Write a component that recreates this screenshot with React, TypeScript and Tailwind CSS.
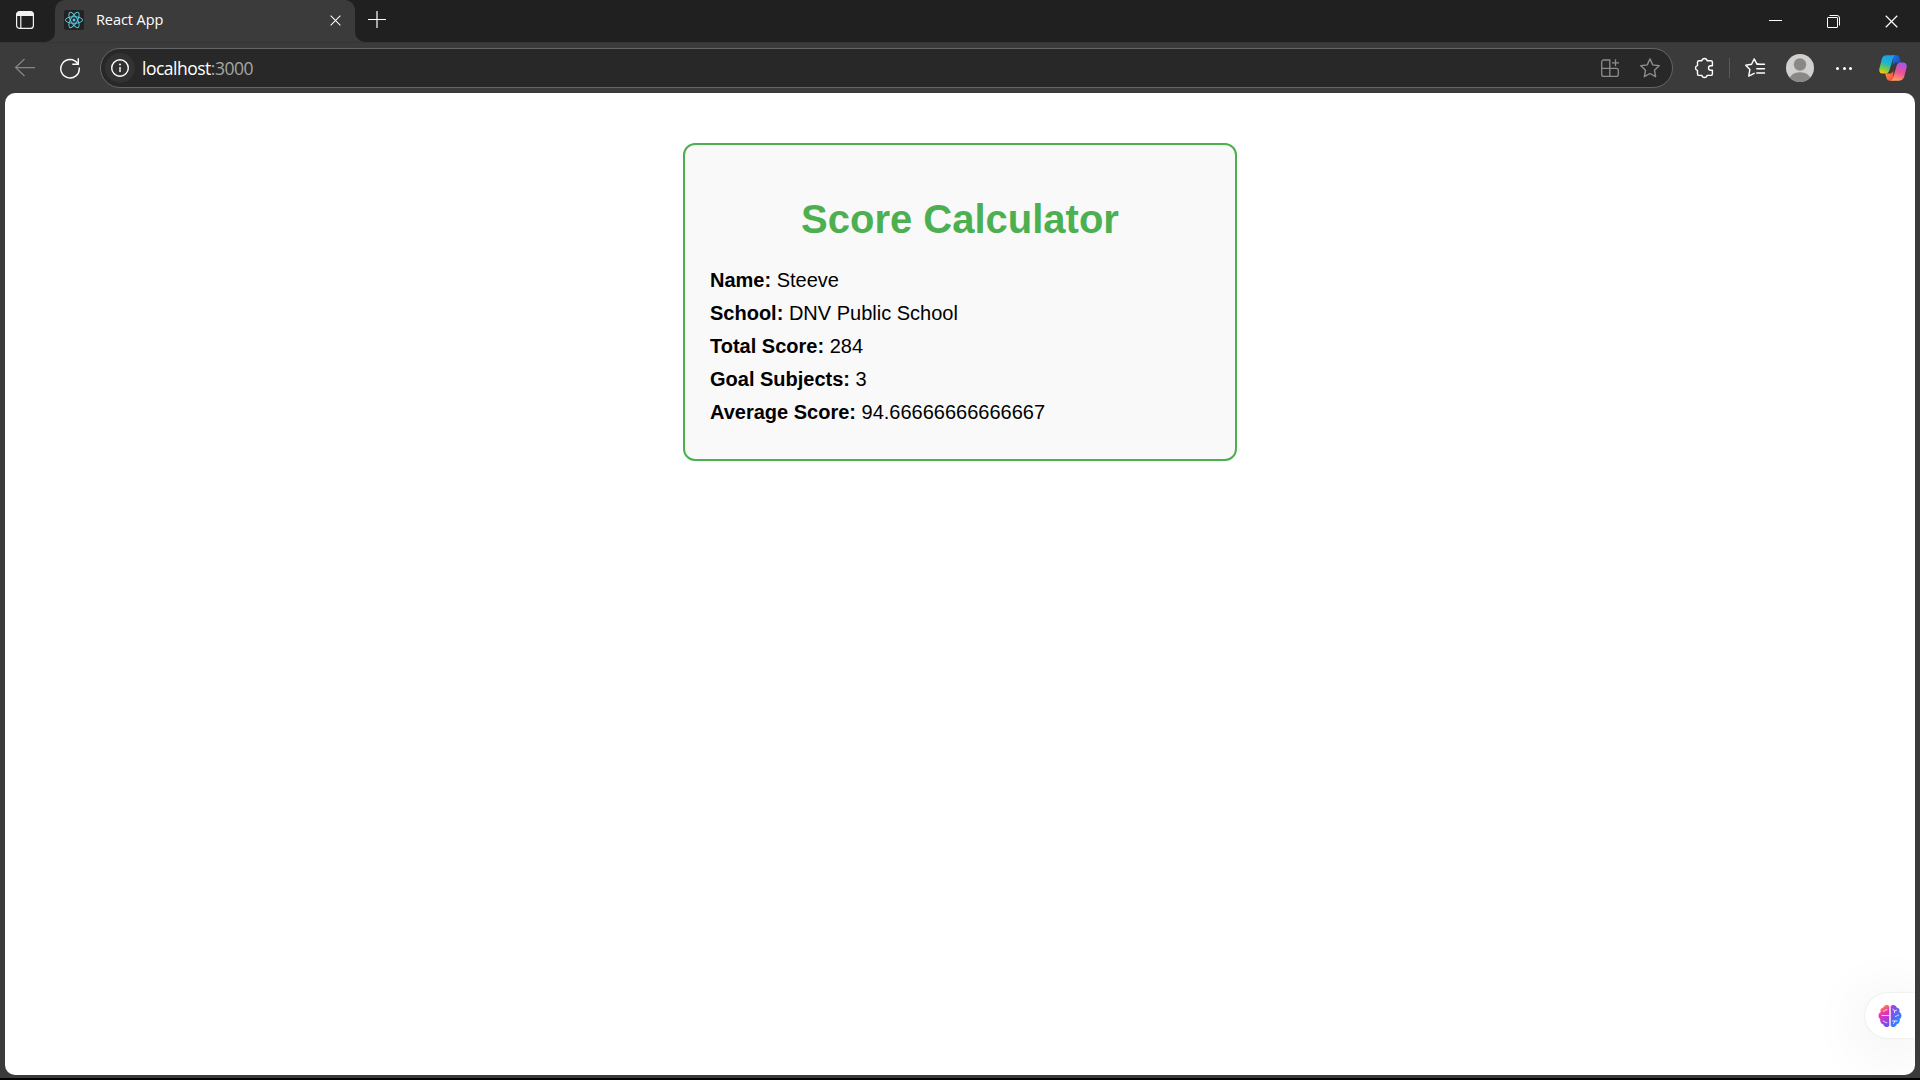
import React from "react";

type IconProps = { className?: string };

const TabActionsIcon = () => (
  <svg className="size-5 text-[#f2f2f2]" viewBox="0 0 20 20" fill="none" stroke="currentColor" strokeWidth="1.2">
    <rect x="1.600" y="1.600" width="16.800" height="16.800" rx="3" />
    <path d="M2 4.500C2 3 3 2 4.500 2h11C17 2 18 3 18 4.500V5.500H2z" fill="currentColor" />
    <path d="M5.800 6v12" />
  </svg>
);

const ReactIcon = () => (
  <svg className="size-5 shrink-0 rounded-[2px] bg-[#222]" viewBox="0 0 20 20" fill="none" stroke="#58c4dc" strokeWidth="1">
    <circle cx="10" cy="10" r="1.5" fill="#58c4dc" stroke="none" />
    <ellipse cx="10" cy="10" rx="8.600" ry="3.300" />
    <ellipse cx="10" cy="10" rx="8.600" ry="3.300" transform="rotate(60 10 10)" />
    <ellipse cx="10" cy="10" rx="8.600" ry="3.300" transform="rotate(120 10 10)" />
  </svg>
);

const BackIcon = () => (
  <svg className="size-[22px] text-[#858585]" viewBox="0 0 22 22" fill="none" stroke="currentColor" strokeWidth="1.25">
    <path d="M21 10.500H1.500M10.500 2 1.600 10.500l8.900 8.500" />
  </svg>
);

const ReloadIcon = () => (
  <svg className="size-[22px] text-white" viewBox="0 0 22 22" fill="none" stroke="currentColor" strokeWidth="1.4">
    <path d="M18.700 6.600A9.250 9.250 0 1 0 20.250 11" strokeLinecap="round" />
    <path d="M19.300 1.300v5.900h-6" />
  </svg>
);

const InfoIcon = () => (
  <svg className="size-5 text-white" viewBox="0 0 20 20" fill="none" stroke="currentColor" strokeWidth="1.4">
    <circle cx="10" cy="10" r="8.300" />
    <path d="M10 9v5" />
    <circle cx="10" cy="6.500" r="0.950" fill="currentColor" stroke="none" />
  </svg>
);

const AppsIcon = () => (
  <svg className="size-5 text-[#8c8c8c]" viewBox="0 0 20 20" fill="none" stroke="currentColor" strokeWidth="1.3">
    <path d="M9.800 10.300H1.700V4a2 2 0 0 1 2-2h6.100zM1.700 10.300h8.100v8.100H3.700a2 2 0 0 1-2-2zM9.800 10.300h6.500a2 2 0 0 1 2 2v4.100a2 2 0 0 1-2 2H9.800zM15.500 1.300v7M12 4.800h7" />
  </svg>
);

const StarIcon = () => (
  <svg className="size-[22px] text-[#8c8c8c]" viewBox="0 0 22 22" fill="none" stroke="currentColor" strokeWidth="1.4" strokeLinejoin="round">
    <path d="m11 1.900 2.750 6 6.500.800-4.800 4.500 1.200 6.500L11 16.500l-5.650 3.200 1.200-6.500-4.800-4.500 6.500-.800z" />
  </svg>
);

const PuzzleIcon = () => (
  <svg className="size-[22px] text-white" viewBox="0 0 22 22" fill="none" stroke="currentColor" strokeWidth="1.4" strokeLinejoin="round">
    <path d="M8.900 3.700a2.650 2.650 0 0 1 5.200 0h3.800a1.500 1.500 0 0 1 1.500 1.500v3.500h-1.600a2.300 2.300 0 0 0 0 4.600h1.600v3.600a1.500 1.500 0 0 1-1.500 1.500h-3.800a2.650 2.650 0 0 1-5.200 0H6a1.500 1.500 0 0 1-1.500-1.500v-3.400a2.500 2.500 0 0 1 0-4.900V5.200A1.500 1.500 0 0 1 6 3.700z" />
  </svg>
);

const FavoritesIcon = () => (
  <svg className="size-[22px] text-white" viewBox="0 0 22 22" fill="none" stroke="currentColor" strokeWidth="1.4" strokeLinejoin="round" strokeLinecap="round">
    <path d="M14.800 7.200 12.800 6.900 10.200 1.900 7.600 7.200 1.700 8.200l4.200 4.300-1.200 6.600 5.500-2.800" />
    <path d="M13.200 7.300H20.500M12.800 11.700h7.700M12.800 16h7.700" />
  </svg>
);

const Avatar = () => (
  <svg className="size-7" viewBox="0 0 28 28">
    <defs>
      <clipPath id="avatar"><circle cx="14" cy="14" r="14" /></clipPath>
    </defs>
    <g clipPath="url(#avatar)">
      <rect width="28" height="28" fill="#d2d0ce" />
      <circle cx="14" cy="10.500" r="6.200" fill="#8a8886" />
      <path d="M3 28c0-6 4-9.800 11-9.800S25 22 25 28z" fill="#8a8886" />
    </g>
  </svg>
);

const CopilotIcon = () => (
  <svg className="h-[26px] w-7" viewBox="0 0 28 26">
    <defs>
      <linearGradient id="cpA" x1="0.600" y1="0" x2="0.300" y2="1">
        <stop offset="0" stopColor="#1b9df2" />
        <stop offset="0.450" stopColor="#20b6c9" />
        <stop offset="0.750" stopColor="#7ac943" />
        <stop offset="1" stopColor="#f5c713" />
      </linearGradient>
      <linearGradient id="cpB" x1="0.600" y1="0" x2="0.300" y2="1">
        <stop offset="0" stopColor="#a455ec" />
        <stop offset="0.500" stopColor="#ee5094" />
        <stop offset="1" stopColor="#ffa25c" />
      </linearGradient>
      <linearGradient id="cpC" x1="0" y1="0" x2="1" y2="1">
        <stop offset="0" stopColor="#1c75e8" />
        <stop offset="1" stopColor="#1746c2" />
      </linearGradient>
      <linearGradient id="cpD" x1="0" y1="0" x2="1" y2="1">
        <stop offset="0" stopColor="#ffa229" />
        <stop offset="1" stopColor="#ef4550" />
      </linearGradient>
    </defs>
    <path d="M14 .300h3.400c1.700 0 2.600 1 3.100 2.600l1.400 4.500h-4.300c-2 0-3.300 1.200-3.900 3.100z" fill="url(#cpC)" />
    <path d="M14 25.700h-3.400c-1.700 0-2.600-1-3.100-2.600l-1.400-4.500h4.300c2 0 3.300-1.200 3.900-3.100z" fill="url(#cpD)" />
    <path d="M7.700.300h9c-1.600.200-2.300 1.400-2.800 3.100l-3.600 12c-.600 2-1.900 3.200-4 3.200H4.100C1 18.600-.300 16.400.400 13.400l2.300-9C3.500 1.600 5.100.300 7.700.300z" fill="url(#cpA)" />
    <path d="M20.300 25.700h-9c1.600-.200 2.300-1.400 2.800-3.100l3.600-12c.600-2 1.900-3.200 4-3.200h2.200c3.100 0 4.400 2.200 3.700 5.200l-2.300 9c-.800 2.800-2.400 4.100-5 4.100z" fill="url(#cpB)" />
  </svg>
);

const BrainIcon = () => (
  <svg className="size-6" viewBox="0 0 24 24">
    <defs>
      <linearGradient id="brainL" x1="0.300" y1="0" x2="0.600" y2="1">
        <stop offset="0" stopColor="#ff9f1c" />
        <stop offset="0.400" stopColor="#f02fb4" />
        <stop offset="1" stopColor="#6a4dff" />
      </linearGradient>
      <linearGradient id="brainR" x1="0" y1="0" x2="0.700" y2="1">
        <stop offset="0" stopColor="#b238e8" />
        <stop offset="0.450" stopColor="#6c5cf2" />
        <stop offset="1" stopColor="#1698ff" />
      </linearGradient>
    </defs>
    <path d="M11.300 2.200C9.500 0 6 .700 5.300 3.400 3 3.700 1.900 5.900 2.700 8 0 9.500-.200 13.500 2.300 15c-.600 2.300.700 4.600 2.900 5.200.900 3 4.600 3.800 6.100 1.500z" fill="url(#brainL)" />
    <path d="M12.700 2.200C14.500 0 18 .700 18.700 3.400c2.300.300 3.400 2.500 2.600 4.600 2.700 1.500 2.900 5.500.400 7 .600 2.300-.700 4.600-2.900 5.200-.900 3-4.600 3.800-6.100 1.500z" fill="url(#brainR)" />
    <path d="M4 11.500h7.300M5.500 7.300c1.200 0 1.500-1.600 3.500-1.600M5.300 17c1.300 0 1.300 1.800 3.600 1.800M15 5l1.500 2 2-.800M16.500 7v1.800M17.500 12.500c1.200 0 1.500-1.500 3-1.500M14.500 17h4.500M17 17l-1.500 2.600" fill="none" stroke="#fff" strokeWidth="1" strokeLinecap="round" opacity="0.800" />
  </svg>
);

const CloseIcon = ({ className }: IconProps) => (
  <svg className={className} viewBox="0 0 14 14" fill="none" stroke="currentColor" strokeWidth="1.3">
    <path d="M.8.8l12.400 12.400M13.200.8.8 13.200" />
  </svg>
);

const TabStrip = () => (
  <div className="flex h-[42px] bg-[#3b3b3b] text-white">
    <div className="flex w-[55px] items-start rounded-br-[10px] bg-[#202020] pt-[10px] pl-[15px]">
      <TabActionsIcon />
    </div>
    <div className="flex w-[300px] bg-[#202020]">
      <div className="flex h-[42px] w-full items-center rounded-t-[10px] bg-[#3b3b3b] pr-[14px] pb-[2px] pl-[9px]">
        <ReactIcon />
        <span className="ml-3 text-[14.500px] leading-5 tracking-[-0.080px]">React App</span>
        <CloseIcon className="mt-px ml-auto size-[11px]" />
      </div>
    </div>
    <div className="flex flex-1 rounded-bl-[10px] bg-[#202020] pl-[13px]">
      <svg className="mt-[10px] size-[19px]" viewBox="0 0 19 19" fill="none" stroke="currentColor" strokeWidth="1.200">
        <path d="M0 9.500h18M9 1v17" />
      </svg>
      <div className="mt-[15px] mr-[22px] ml-auto flex gap-[45px]">
        <svg className="size-[13px]" viewBox="0 0 13 13" stroke="currentColor">
          <path d="M0 5.500h13" />
        </svg>
        <svg className="size-[13px]" viewBox="0 0 13 13" fill="none" stroke="currentColor">
          <rect x="0.500" y="2.500" width="10" height="10" rx="0.500" />
          <path d="M2.500.500h7.500a2.500 2.500 0 0 1 2.500 2.500v7.500" />
        </svg>
        <CloseIcon className="size-[13px]" />
      </div>
    </div>
  </div>
);

const Toolbar = () => (
  <div className="flex h-[51px] items-center border-t border-[#353535] bg-[#3b3b3b] pl-[14px]">
    <BackIcon />
    <div className="ml-[23px]"><ReloadIcon /></div>
    <div className="ml-[19px] flex h-10 w-[1573px] items-center rounded-full border border-[#666] bg-[#282828] pr-[11px] pl-1">
      <div className="flex size-[30px] items-center justify-center rounded-full bg-[#323232]">
        <InfoIcon />
      </div>
      <div className="-mt-px ml-[7px] text-[17.500px] leading-6 tracking-[-0.500px] text-white">
        localhost<span className="text-[#a6a6a6]">:3000</span>
      </div>
      <div className="ml-auto"><AppsIcon /></div>
      <div className="ml-[19px]"><StarIcon /></div>
    </div>
    <div className="ml-5"><PuzzleIcon /></div>
    <div className="ml-[14px] h-5 w-px bg-[#5a5a5a]" />
    <div className="ml-[14px]"><FavoritesIcon /></div>
    <div className="ml-5"><Avatar /></div>
    <div className="ml-[22px] flex gap-[3.500px]">
      <span className="size-[3px] rounded-full bg-white" />
      <span className="size-[3px] rounded-full bg-white" />
      <span className="size-[3px] rounded-full bg-white" />
    </div>
    <div className="ml-[27px]"><CopilotIcon /></div>
  </div>
);

const details: [string, string][] = [
  ["Name:", "Steeve"],
  ["School:", "DNV Public School"],
  ["Total Score:", "284"],
  ["Goal Subjects:", "3"],
  ["Average Score:", "94.66666666666667"],
];

const ScoreCard = () => (
  <section className="mx-auto w-[554px] rounded-[12px] border-2 border-[#4caf50] bg-[#f9f9f9] px-[25px] pt-[25px] pb-[35px] font-['Liberation_Sans',Arial,sans-serif] text-black">
    <h1 className="mt-[26px] text-center text-[40px] leading-[46px] font-bold text-[#4caf50]">Score Calculator</h1>
    <div className="mt-[27px] flex flex-col gap-[10px] text-[20px] leading-[23px]">
      {details.map(([label, value]) => (
        <p key={label}><b>{label}</b> {value}</p>
      ))}
    </div>
  </section>
);

export default function App() {
  return (
    <div className="flex h-[1080px] w-[1920px] flex-col overflow-hidden border-b-2 border-black bg-[#3b3b3b] font-['Open_Sans','Noto_Sans',sans-serif]">
      <TabStrip />
      <Toolbar />
      <main className="relative mx-[5px] mb-[3px] flex-1 overflow-hidden rounded-[10px] bg-white pt-[50px]">
        <ScoreCard />
        <div className="absolute right-0 bottom-[37px] flex h-[45px] w-[50px] items-center rounded-l-full bg-white pl-[13px] shadow-[0_8px_60px_rgba(0,0,0,0.100),0_0_2px_rgba(0,0,0,0.120)]">
          <BrainIcon />
        </div>
      </main>
    </div>
  );
}
